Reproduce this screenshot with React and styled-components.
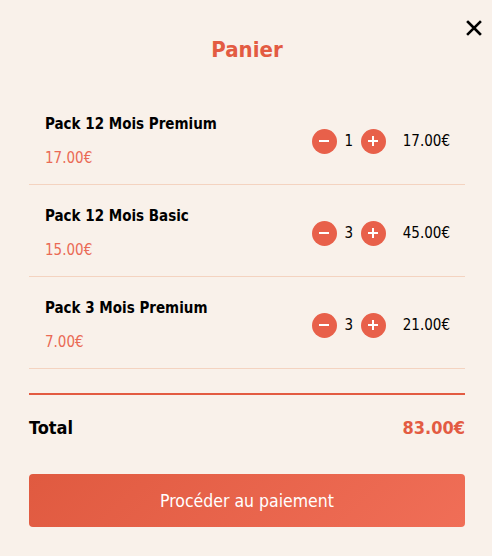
import React, { useState } from "react";
import styled, { createGlobalStyle } from "styled-components";

const GlobalStyle = createGlobalStyle`
  html, body {
    margin: 0;
    padding: 0;
    background: #f9f1ea;
  }
  * {
    box-sizing: border-box;
  }
`;

const initialItems = [
  { id: 1, name: "Pack 12 Mois Premium", price: 17, qty: 1 },
  { id: 2, name: "Pack 12 Mois Basic", price: 15, qty: 3 },
  { id: 3, name: "Pack 3 Mois Premium", price: 7, qty: 3 },
];

const App = () => {
  const [items, setItems] = useState(initialItems);

  const changeQty = (id, delta) => {
    setItems(items.map((it) => (it.id === id ? { ...it, qty: Math.max(1, it.qty + delta) } : it)));
  };

  const total = items.reduce((sum, it) => sum + it.price * it.qty, 0);

  return (
    <>
      <GlobalStyle />
      <Modal>
        <CloseButton aria-label="Fermer">
          <svg width="16" height="16" viewBox="0 0 16 16">
            <path d="M2 2 L14 14 M14 2 L2 14" stroke="#000" strokeWidth="2.6" strokeLinecap="square" />
          </svg>
        </CloseButton>
        <Title>Panier</Title>

        <ItemList>
          {items.map((it) => (
            <ItemRow key={it.id}>
              <ItemInfo>
                <ItemName>{it.name}</ItemName>
                <ItemPrice>{it.price.toFixed(2)}€</ItemPrice>
              </ItemInfo>
              <Controls>
                <RoundButton onClick={() => changeQty(it.id, -1)}>
                  <svg width="12" height="12" viewBox="0 0 12 12">
                    <path d="M1 6 H11" stroke="#fff" strokeWidth="2" />
                  </svg>
                </RoundButton>
                <Qty>{it.qty}</Qty>
                <RoundButton onClick={() => changeQty(it.id, 1)}>
                  <svg width="12" height="12" viewBox="0 0 12 12">
                    <path d="M1 6 H11 M6 1 V11" stroke="#fff" strokeWidth="2" />
                  </svg>
                </RoundButton>
                <LineTotal>{(it.price * it.qty).toFixed(2)}€</LineTotal>
              </Controls>
            </ItemRow>
          ))}
        </ItemList>

        <TotalRow>
          <TotalLabel>Total</TotalLabel>
          <TotalValue>{total.toFixed(2)}€</TotalValue>
        </TotalRow>

        <PayButton>Procéder au paiement</PayButton>
      </Modal>
    </>
  );
};

const Modal = styled.div`
  position: relative;
  width: 492px;
  height: 556px;
  padding: 36px 27px 29px 29px;
  background: #f9f1ea;
  font-family: Tahoma, "DejaVu Sans Condensed", "DejaVu Sans", sans-serif;
  color: #000;
`;

const CloseButton = styled.button`
  position: absolute;
  top: 20px;
  right: 10px;
  width: 16px;
  height: 16px;
  padding: 0;
  border: none;
  background: none;
  cursor: pointer;
  display: flex;
`;

const Title = styled.h2`
  margin: 0;
  text-align: center;
  font-size: 22px;
  line-height: 28px;
  font-weight: bold;
  color: #e35b42;
`;

const ItemList = styled.div`
  margin-top: 29px;
  display: flex;
  flex-direction: column;
`;

const ItemRow = styled.div`
  display: flex;
  align-items: center;
  justify-content: space-between;
  padding: 22px 15px 17px 16px;
  border-bottom: 1px solid #f4d3c0;
`;

const ItemInfo = styled.div`
  display: flex;
  flex-direction: column;
  gap: 16px;
`;

const ItemName = styled.div`
  font-size: 15px;
  line-height: 18px;
  font-weight: bold;
`;

const ItemPrice = styled.div`
  font-size: 15px;
  line-height: 18px;
  color: #ea6a55;
`;

const Controls = styled.div`
  display: flex;
  align-items: center;
`;

const RoundButton = styled.button`
  width: 25px;
  height: 25px;
  border-radius: 50%;
  border: none;
  padding: 0;
  background: #e8604a;
  display: flex;
  align-items: center;
  justify-content: center;
  cursor: pointer;
`;

const Qty = styled.span`
  width: 24px;
  text-align: center;
  font-size: 15px;
`;

const LineTotal = styled.span`
  margin-left: 17px;
  font-size: 15px;
`;

const TotalRow = styled.div`
  margin-top: 24px;
  border-top: 2px solid #e35b42;
  padding-top: 22px;
  display: flex;
  justify-content: space-between;
  align-items: center;
`;

const TotalLabel = styled.span`
  font-size: 18px;
  line-height: 22px;
  font-weight: bold;
`;

const TotalValue = styled.span`
  font-size: 18px;
  line-height: 22px;
  font-weight: bold;
  color: #e35b42;
`;

const PayButton = styled.button`
  margin-top: 35px;
  width: 100%;
  height: 53px;
  border: none;
  border-radius: 4px;
  background: linear-gradient(135deg, #e05a40 0%, #f06e57 100%);
  color: #fff;
  font-family: inherit;
  font-size: 17.5px;
  cursor: pointer;
`;

export default App;
